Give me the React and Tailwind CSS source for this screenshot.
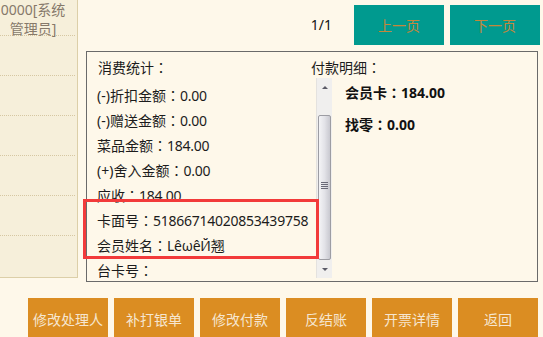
import React from 'react';

const rows = [
  ['(-)折扣金额', '0.00'],
  ['(-)赠送金额', '0.00'],
  ['菜品金额', '184.00'],
  ['(+)舍入金额', '0.00'],
  ['应收', '184.00'],
  ['卡面号', '51866714020853439758'],
  ['会员姓名', 'LêωêЙ翘'],
  ['台卡号', ''],
];

const actions = ['修改处理人', '补打银单', '修改付款', '反结账', '开票详情', '返回'];

// full-width colon, centred like the original
const Colon = () => <span className="font-['Noto_Sans_CJK_JP']">：</span>;

function Scrollbar() {
  return (
    <div className="w-[16px] h-full flex flex-col bg-[#f0efee] border-l border-[#e4e2df]">
      <div className="h-[18px] flex items-center justify-center">
        <div className="w-0 h-0 border-l-[3px] border-r-[3px] border-b-[3px] border-l-transparent border-r-transparent border-b-[#5a5a66]" />
      </div>
      <div className="h-[19px]" />
      <div className="flex-1 mx-[1px] rounded-[2px] border border-[#9d9da3] bg-gradient-to-r from-[#f4f4f6] via-[#e3e3e8] to-[#c9c9d0] flex flex-col items-center pt-[66px]">
        <div className="w-[7px] h-[1px] bg-[#6a6a78] mb-[1px]" />
        <div className="w-[7px] h-[1px] bg-[#6a6a78] mb-[1px]" />
        <div className="w-[7px] h-[1px] bg-[#6a6a78] mb-[1px]" />
        <div className="w-[7px] h-[1px] bg-[#6a6a78]" />
      </div>
      <div className="h-[18px] flex items-center justify-center">
        <div className="w-0 h-0 border-l-[3px] border-r-[3px] border-t-[3px] border-l-transparent border-r-transparent border-t-[#5a5a66]" />
      </div>
    </div>
  );
}

export default function App() {
  return (
    <div
      className="relative w-[543px] h-[337px] overflow-hidden bg-[#fef8ea] text-[14px] text-[#1c1c1c]"
      style={{ fontFamily: '"Noto Sans", "Noto Sans CJK SC", sans-serif' }}
    >
      <div className="flex h-[282px]">
        {/* sidebar */}
        <div className="w-[78px] h-[278px] shrink-0 bg-[#f6efda] border-r border-b border-[#dccfa8]">
          <div className="h-[36px] border-b border-dotted border-[#d6c7a2] mr-[2px]">
            <div className="w-[66px] text-center leading-[19px] text-[#86796a]">
              <div className="whitespace-nowrap">0000[系统</div>
              <div>管理员]</div>
            </div>
          </div>
          {[0, 1, 2, 3, 4].map(i => (
            <div key={i} className="h-[40px] border-b border-dotted border-[#d6c7a2] mr-[2px]" />
          ))}
        </div>

        <div className="flex-1 flex flex-col pl-[8px]">
          {/* pager */}
          <div className="h-[51px] flex items-start justify-end pr-[3px] pt-[5px]">
            <span className="leading-[40px] text-[14px] text-[#111] mr-[22px]">1/1</span>
            <div className="w-[90px] h-[40px] bg-[#009a8f] text-[#c4873c] flex items-center justify-center">上一页</div>
            <div className="w-[90px] h-[40px] bg-[#009a8f] text-[#c4873c] flex items-center justify-center ml-[6px]">下一页</div>
          </div>

          {/* detail box */}
          <div className="w-[452px] h-[231px] border border-[#6a6a6a] flex flex-col">
            <div className="h-[26px] flex pt-[6px] leading-[18px]">
              <div className="w-[224px] pl-[11px]">消费统计<Colon /></div>
              <div>付款明细<Colon /></div>
            </div>
            <div className="flex h-[200px]">
              <div className="w-[229px] h-full overflow-hidden pl-[10px] pt-[5px]">
                {rows.map(([k, v]) => (
                  <div key={k} className="h-[25px] leading-[25px] whitespace-nowrap">
                    {k}<Colon /><span className="tracking-[-0.25px]">{v}</span>
                  </div>
                ))}
              </div>
              <Scrollbar />
              <div className="pl-[13px] pt-[5px] font-bold text-[14px] text-[#111]">
                <div className="leading-[18px] mb-[13px]">会员卡<Colon />184.00</div>
                <div className="leading-[18px]">找零<Colon />0.00</div>
              </div>
            </div>
          </div>
        </div>
      </div>

      {/* actions */}
      <div className="flex gap-[6px] pl-[28px] mt-[16px]">
        {actions.map(a => (
          <div key={a} className="w-[80px] h-[42px] bg-[#db8d22] text-[#f6e6d0] flex items-center justify-center">{a}</div>
        ))}
      </div>

      {/* highlight */}
      <div className="absolute left-[83px] top-[199px] w-[236px] h-[60px] border-[3px] border-[#f23a3a]" />
    </div>
  );
}
